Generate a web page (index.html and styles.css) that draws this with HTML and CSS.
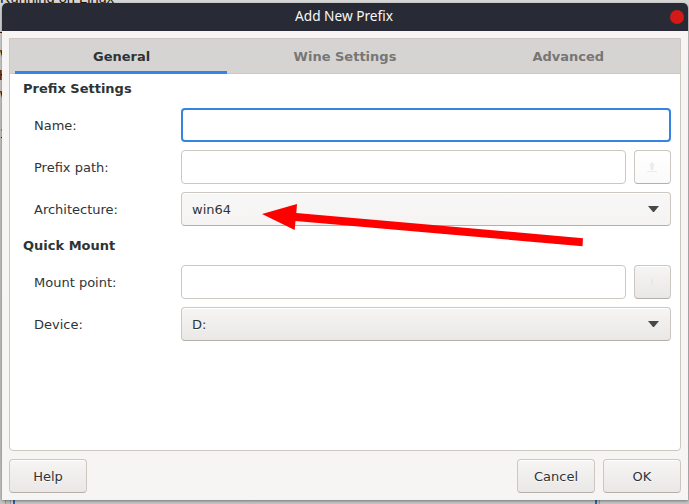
FILE: index.html
```html
<!DOCTYPE html>
<html lang="en">
<head>
<meta charset="utf-8">
<title>Add New Prefix</title>
<link rel="stylesheet" href="styles.css">
</head>
<body>
<div class="backdrop" aria-hidden="true">
  <span class="behind heading">Running on Linux</span>
  <span class="behind dash">–</span>
  <span class="behind line1">W</span>
  <span class="behind line2">H</span>
  <span class="behind line3">W</span>
  <span class="behind line4">1</span>
  <div class="edge edge-left"></div>
  <div class="edge edge-right"></div>
</div>
<main class="window">
  <header class="titlebar"><h1>Add New Prefix</h1><button class="close" aria-label="Close"></button></header>
  <div class="content">
    <section class="notebook">
      <nav class="tabs">
        <div class="tab active">General</div>
        <div class="tab">Wine Settings</div>
        <div class="tab">Advanced</div>
      </nav>
      <div class="page">
        <h2>Prefix Settings</h2>
        <div class="row"><label>Name:</label><div class="entry focused"></div></div>
        <div class="row"><label>Prefix path:</label><div class="entry"></div>
          <div class="button browse faded"><svg width="11" height="12" viewBox="0 0 11 12"><path d="M5 1 L8 4.500 H6.500 V9 H3.500 V4.500 H2 Z M0 10 H10 V11 H0 Z"/></svg></div></div>
        <div class="row"><label>Architecture:</label><div class="button combo hover"><span>win64</span><svg width="11" height="6" viewBox="0 0 11 6"><path d="M0 0 H11 L6 6 H5 Z"/></svg></div></div>
        <h2 class="mount">Quick Mount</h2>
        <div class="row"><label>Mount point:</label><div class="entry"></div>
          <div class="button browse"><svg width="11" height="12" viewBox="0 0 11 12"><path d="M4.500 3 H5.500 V9 H4.500 Z"/></svg></div></div>
        <div class="row"><label>Device:</label><div class="button combo"><span>D:</span><svg width="11" height="6" viewBox="0 0 11 6"><path d="M0 0 H11 L6 6 H5 Z"/></svg></div></div>
      </div>
    </section>
    <footer class="actions">
      <div class="button action help">Help</div>
      <div class="button action">Cancel</div>
      <div class="button action">OK</div>
    </footer>
  </div>
</main>
<svg class="arrow" width="330" height="50" viewBox="258 198 330 50"><path d="M262 214 L297 204 L296.300 213 L583 238.200 L582.500 246.200 L295.500 221 L294.700 230 Z"/></svg>
</body>
</html>
```

FILE: styles.css
```css
* { box-sizing: border-box; }
body {
  margin: 0;
  width: 689px;
  height: 504px;
  overflow: hidden;
  position: relative;
  background: #cfcfcf;
  color: #2e3436;
  font: 13px/16px "DejaVu Sans", sans-serif;
}
h1, h2 { margin: 0; font-size: inherit; }

.backdrop {
  position: absolute;
  inset: 0;
  overflow: hidden;
  background: linear-gradient(#d6d6d6 0, #c0c0c0 120px, #bcbcbc 450px, #c4c4c4);
}
.behind {
  position: absolute;
  left: 0;
  color: #20140c;
  font: 14px/16px "Liberation Sans", sans-serif;
}
.heading { top: -10px; left: 0; font-size: 14.667px; }
.dash { top: 23px; }
.line1 { top: 47px; }
.line2 { top: 67px; left: -1px; }
.line3 { top: 88px; }
.line4 { top: 125px; }
.edge { position: absolute; bottom: 0; height: 4px; }
.edge-left { left: 5px; width: 10px; background: linear-gradient(90deg, #999 1px, #bbb 1px 5px, #999 5px 6px, #ccc 6px 8px, #2b63ad 8px); }
.edge-right { left: 595px; width: 5px; background: linear-gradient(90deg, #2b63ad 2px, #bbb 2px 4px, #999 4px); }

.window {
  position: relative;
  display: flex;
  flex-direction: column;
  width: 686px;
  height: 497px;
  margin: 3px 1px 4px 2px;
  background: #f6f5f4;
  border-radius: 5px 5px 0 0;
  box-shadow: 0 1px 3px #0006;
}
.titlebar {
  display: grid;
  grid-template-columns: 20px 1fr 20px;
  align-items: center;
  height: 28px;
  padding-right: 2px;
  background: #282a36;
  border-radius: 5px 5px 0 0;
  color: #f8f8f2;
}
.titlebar h1 {
  grid-column: 2;
  text-align: center;
  font: 400 13.667px/20px "Noto Sans", sans-serif;
  padding-bottom: 2px;
}
.close {
  width: 14px;
  height: 14px;
  margin-left: 4px;
  padding: 0;
  border: 0;
  border-radius: 50%;
  background: #d41919;
}
.content { flex: 1; padding: 7px; display: flex; flex-direction: column; gap: 8px; }
.notebook {
  height: 413px;
  border: 1px solid #cdc7c2;
  border-radius: 0 0 4px 4px;
  background: #fff;
}
.tabs {
  display: flex;
  height: 35px;
  margin: 0 -1px;
  background: #d6d4d2;
  border: solid #cdc7c2;
  border-width: 0 1px 1px;
  font-weight: 700;
  color: #777675;
}
.tab {
  position: relative;
  flex: 1;
  display: flex;
  align-items: center;
  justify-content: center;
  padding-top: 2px;
}
.active { color: #2e3436; }
.active::after {
  content: "";
  position: absolute;
  left: 5px;
  right: 6px;
  bottom: -1px;
  height: 3px;
  background: #3584e4;
}
.page { padding: 7px 9px 0 13px; }
.page h2 { height: 27px; }
.page .mount { padding-top: 4px; height: 31px; }
.row {
  display: grid;
  grid-template-columns: 147px 1fr auto;
  align-items: center;
  height: 34px;
  margin: 0 0 8px 11px;
}
.row label { padding-top: 2px; }
.entry { height: 34px; border: 1px solid #cdc7c2; border-radius: 4px; background: #fff; }
.focused { border: 2px solid #3584e4; }
.button {
  display: flex;
  align-items: center;
  justify-content: center;
  height: 34px;
  border: 1px solid #cdc7c2;
  border-bottom-color: #b5afaa;
  border-radius: 4px;
  background: linear-gradient(#f6f5f4, #e9e8e7);
  box-shadow: inset 0 1px #fff;
  text-shadow: 0 1px #fffc;
}
.hover { background: linear-gradient(#f8f7f7, #f5f4f3); }
.browse { width: 37px; margin-left: 8px; fill: #e4e2e0; }
.faded { background: linear-gradient(#fff, #fafafa); fill: #ebebea; }
.combo {
  grid-column: 2 / 4;
  justify-content: space-between;
  padding: 1px 11px 0 10px;
  fill: #45494b;
}
.combo svg { margin-top: -2px; }
.actions { display: flex; gap: 8px; }
.action { width: 78px; padding-top: 2px; }
.help { margin-right: auto; }
.arrow { position: absolute; left: 258px; top: 198px; fill: #f00; }
```
